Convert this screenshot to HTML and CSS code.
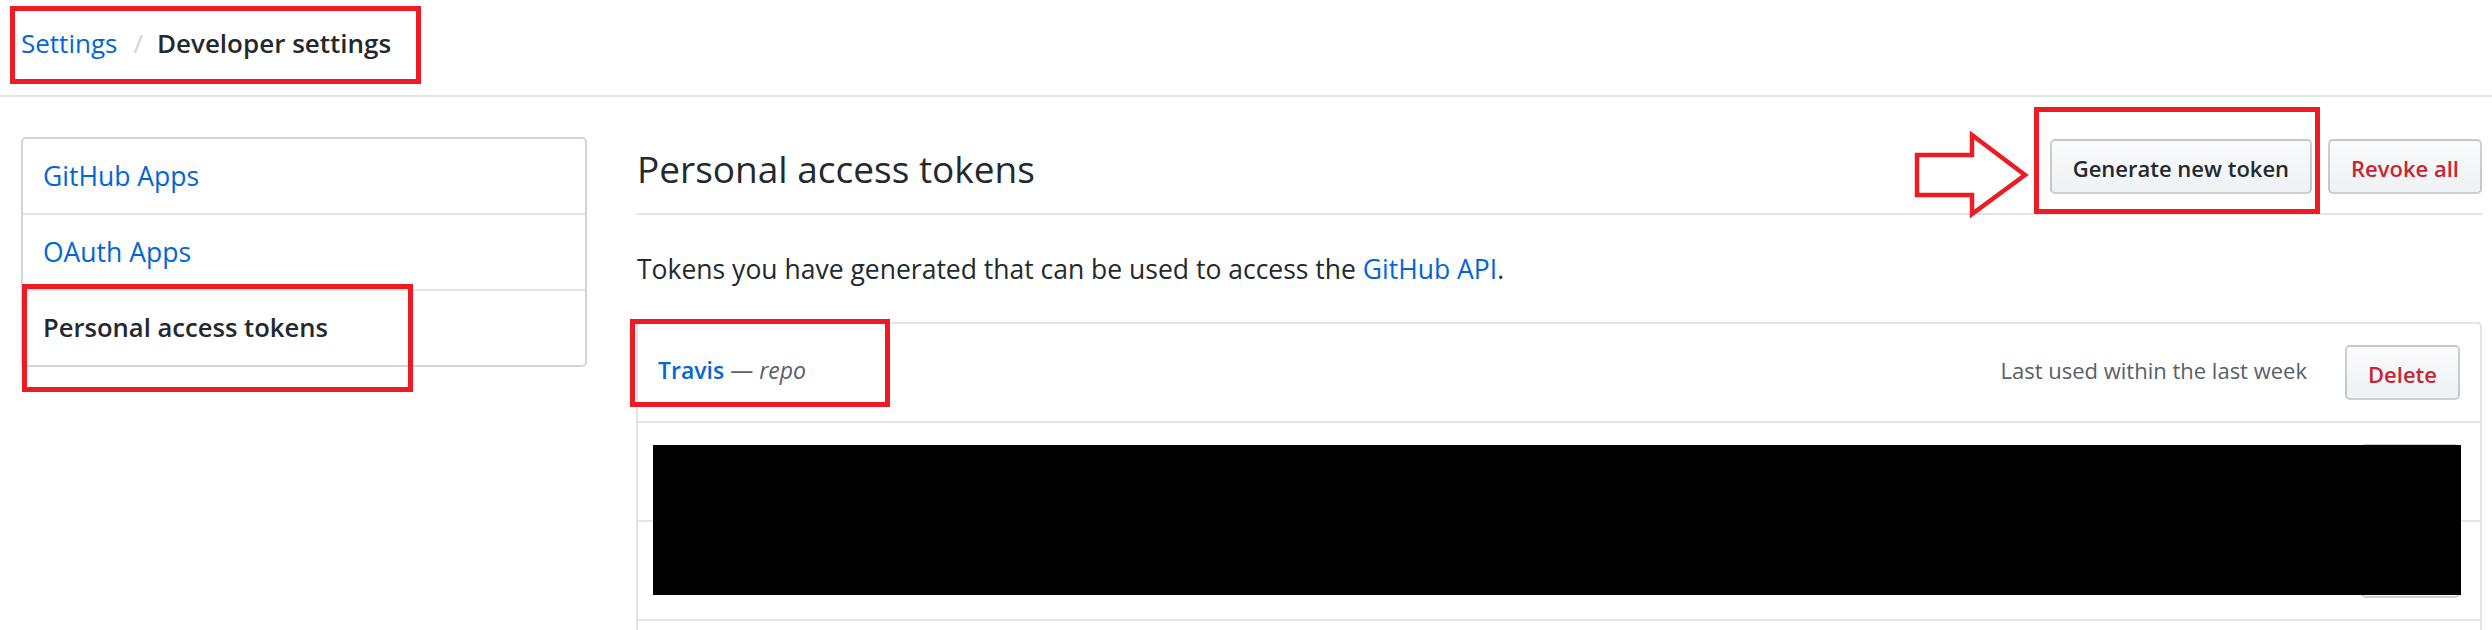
FILE: index.html
```html
<!DOCTYPE html>
<html lang="en">
<head>
<meta charset="utf-8">
<title>Developer settings · Personal access tokens</title>
<link rel="stylesheet" href="styles.css">
</head>
<body>
<div class="page">
  <header class="breadcrumb">
    <a class="crumb-link" href="#">Settings</a>
    <span class="crumb-sep">/</span>
    <strong class="crumb-current">Developer settings</strong>
  </header>

  <div class="layout">
    <nav class="menu">
      <a class="menu-item" href="#">GitHub Apps</a>
      <a class="menu-item" href="#">OAuth Apps</a>
      <a class="menu-item selected" href="#">Personal access tokens</a>
    </nav>

    <main class="content">
      <div class="subhead">
        <h2 class="subhead-heading">Personal access tokens</h2>
        <div class="subhead-actions">
          <button class="btn" type="button">Generate new token</button>
          <button class="btn btn-danger" type="button">Revoke all</button>
        </div>
      </div>

      <p class="lead">Tokens you have generated that can be used to access the <a class="link" href="#">GitHub API</a>.</p>

      <div class="token-list">
        <div class="token-row">
          <div class="token-name"><a class="token-link" href="#">Travis</a> <span class="token-scope">— <em>repo</em></span></div>
          <div class="token-meta">
            <span class="last-used">Last used within the last week</span>
            <button class="btn btn-danger" type="button">Delete</button>
          </div>
        </div>
        <div class="token-row">
          <div class="token-name"><span class="token-scope">token</span></div>
          <button class="btn" type="button">Copy</button>
        </div>
        <div class="token-row">
          <div class="token-name"><span class="token-scope">token</span></div>
          <button class="btn" type="button">Copy</button>
        </div>
        <div class="token-row"></div>
        <div class="redaction"></div>
      </div>
    </main>
  </div>

  <svg class="annotations" width="2492" height="630" viewBox="0 0 2492 630" aria-hidden="true">
    <g fill="none" stroke="#ed1c24" stroke-width="5">
      <rect x="12.5" y="8.5" width="406" height="73"/>
      <rect x="24.5" y="286.5" width="386" height="103"/>
      <rect x="2036.5" y="109.5" width="281" height="102"/>
      <rect x="632.5" y="321.5" width="255" height="83"/>
      <polygon stroke-width="4.5" stroke-linejoin="miter" points="1917,155 1972,155 1972,135 2025,175 1972,214 1972,195 1917,195"/>
    </g>
  </svg>
</div>
</body>
</html>
```
FILE: styles.css
```css
* { box-sizing: border-box; }

html, body {
  margin: 0;
  background: #fff;
  overflow: hidden;
}

body {
  font-family: "Open Sans", "Noto Sans", sans-serif;
  color: #24292e;
}

.page {
  position: relative;
  width: 2492px;
  height: 630px;
  overflow: hidden;
}

a { text-decoration: none; }

/* Breadcrumb */
.breadcrumb {
  display: flex;
  align-items: baseline;
  padding: 25px 0 34px 21px;
  font-size: 26px;
  line-height: 36px;
  border-bottom: 2px solid #e1e4e8;
}
.crumb-link { color: #0366d6; }
.crumb-sep { color: #d1d5da; margin: 0 14px 0 16px; }
.crumb-current { font-weight: 600; color: #24292e; }

/* Layout */
.layout {
  display: flex;
  gap: 49px;
  padding: 40px 10px 0 21px;
}

/* Side menu */
.menu {
  flex: 0 0 566px;
  display: flex;
  flex-direction: column;
  align-self: flex-start;
  border: 2px solid #d1d5da;
  border-radius: 5px;
  background: #fff;
}
.menu-item {
  display: block;
  height: 76px;
  padding: 0 20px;
  font-size: 26.5px;
  line-height: 74px;
  color: #0366d6;
  border-bottom: 2px solid #e1e4e8;
}
.menu-item:last-child { border-bottom: 0; height: 74px; }
.menu-item.selected {
  font-size: 25.6px;
  font-weight: 600;
  color: #24292e;
}

/* Content */
.content {
  flex: 1;
  min-width: 0;
}

.subhead {
  display: flex;
  justify-content: space-between;
  align-items: flex-start;
  padding: 2px 0 19px;
  border-bottom: 2px solid #e1e4e8;
}
.subhead-heading {
  margin: 4px 0 0 1px;
  font-size: 37px;
  font-weight: 400;
  line-height: 51px;
}
.subhead-actions {
  display: flex;
  gap: 16px;
}

.btn {
  height: 55px;
  padding: 3px 21px 0;
  font-family: inherit;
  font-size: 22px;
  font-weight: 600;
  line-height: 48px;
  color: #24292e;
  white-space: nowrap;
  background: linear-gradient(180deg, #fafbfc 0%, #eff3f6 90%);
  border: 2px solid rgba(27, 31, 35, 0.2);
  border-radius: 5px;
}
.btn-danger { color: #cb2431; }

.lead {
  margin: 36px 0 35px 1px;
  font-size: 26.5px;
  line-height: 36px;
}
.link { color: #0366d6; }

/* Token list */
.token-list {
  position: relative;
  border: 2px solid #e1e4e8;
  border-radius: 5px;
}
.token-row {
  display: flex;
  align-items: center;
  justify-content: space-between;
  height: 99px;
  padding: 0 20px;
  border-bottom: 2px solid #e1e4e8;
}
.token-name {
  font-size: 23px;
  margin-bottom: 5px;
}
.token-link { font-weight: 600; color: #0366d6; }
.token-scope { color: #586069; }
.token-scope em { font-style: italic; }

.token-meta {
  display: flex;
  align-items: center;
  gap: 38px;
}
.last-used {
  font-size: 22px;
  color: #586069;
  margin-bottom: 5px;
}

.redaction {
  position: absolute;
  left: 15px;
  top: 121px;
  width: 1808px;
  height: 150px;
  background: #000;
}

/* Annotation overlay */
.annotations {
  position: absolute;
  left: 0;
  top: 0;
  pointer-events: none;
}
```
